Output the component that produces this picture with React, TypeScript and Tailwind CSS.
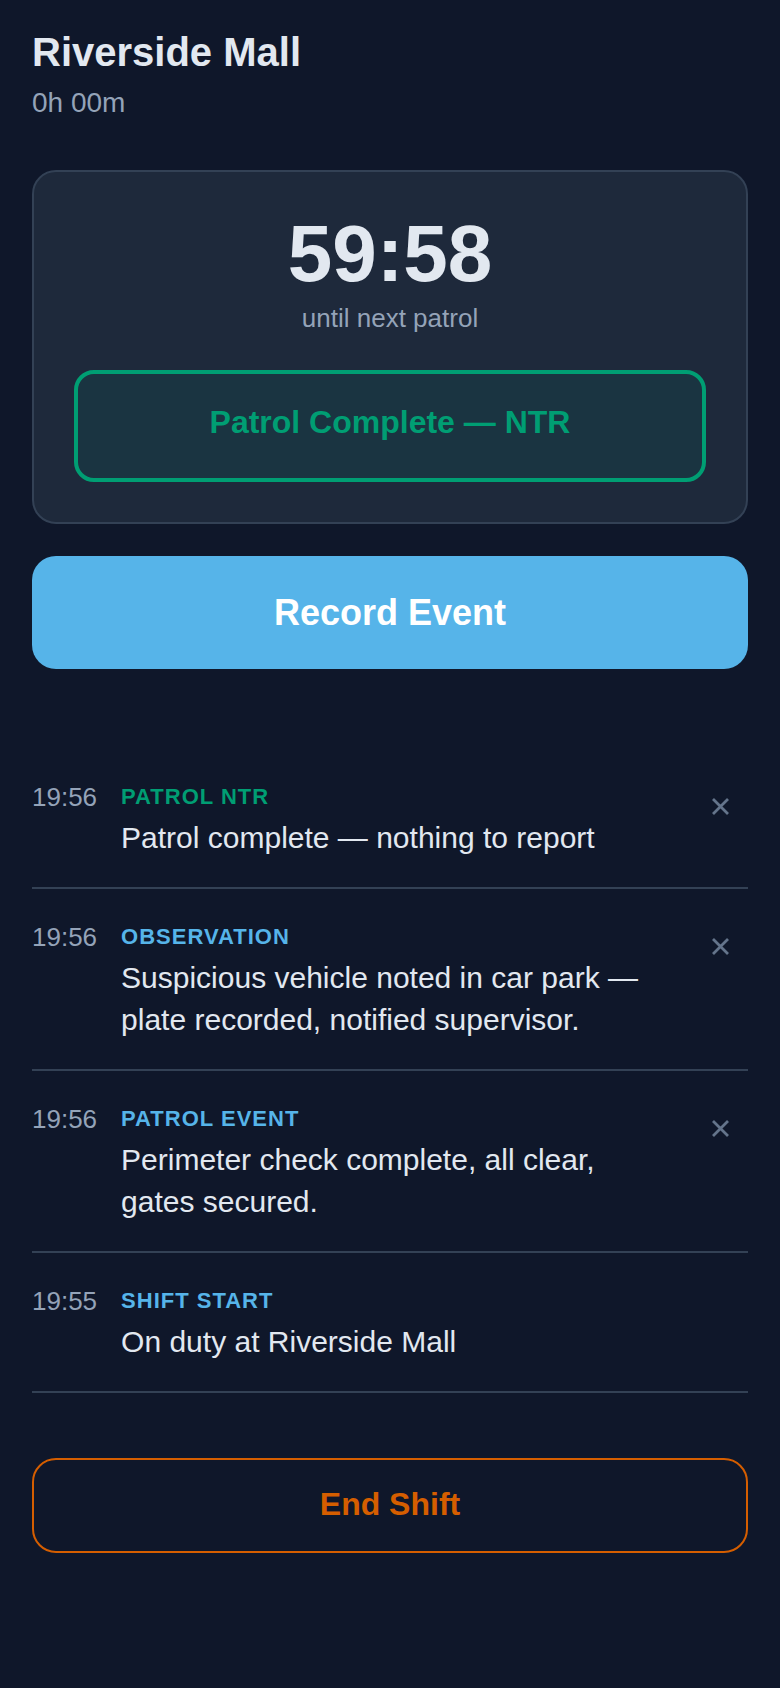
import React from 'react';

type LogEntry = {
  time: string;
  kind: string;
  tone: 'green' | 'blue';
  text: string;
  removable: boolean;
};

const entries: LogEntry[] = [
  { time: '19:56', kind: 'Patrol NTR', tone: 'green', text: 'Patrol complete — nothing to report', removable: true },
  {
    time: '19:56',
    kind: 'Observation',
    tone: 'blue',
    text: 'Suspicious vehicle noted in car park — plate recorded, notified supervisor.',
    removable: true,
  },
  {
    time: '19:56',
    kind: 'Patrol Event',
    tone: 'blue',
    text: 'Perimeter check complete, all clear, gates secured.',
    removable: true,
  },
  { time: '19:55', kind: 'Shift Start', tone: 'blue', text: 'On duty at Riverside Mall', removable: false },
];

function CloseIcon() {
  return (
    <svg width="19" height="19" viewBox="0 0 19 19" fill="none">
      <path d="M2 2L17 17M17 2L2 17" stroke="#64748b" strokeWidth="2.8" />
    </svg>
  );
}

export default function App() {
  return (
    <div className="min-h-screen bg-[#0f172a] px-[32px] pt-[26px] pb-[80px] font-['Liberation_Sans',Arial,sans-serif]">
      {/* header */}
      <h1 className="text-[40px] leading-[52px] font-bold text-[#e2e8f0]">Riverside Mall</h1>
      <p className="mt-[4px] text-[28px] leading-[42px] text-[#94a3b8]">0h 00m</p>

      {/* patrol timer */}
      <div className="mt-[46px] rounded-[24px] border-2 border-[#334155] bg-[#1e293b] p-[40px]">
        <div className="text-center text-[80px] leading-[84px] font-bold text-[#e2e8f0]">59:58</div>
        <div className="mt-[3px] text-center text-[26px] leading-[39px] text-[#94a3b8]">until next patrol</div>
        <button className="mt-[32px] flex h-[112px] w-full items-center justify-center rounded-[20px] border-4 border-[#009E73] bg-[#009E73]/10 pb-[8px] text-[32px] leading-[48px] font-bold text-[#009E73]">
          Patrol Complete — NTR
        </button>
      </div>

      <button className="mt-[32px] flex h-[113px] w-full items-center justify-center rounded-[24px] bg-[#56B4E9] text-[36px] font-bold text-white">
        Record Event
      </button>

      {/* log */}
      <ul className="mt-[80px]">
        {entries.map((e, i) => (
          <li key={i} className="flex border-b-2 border-[#334155] pt-[31px] pb-[28px]">
            <div className="flex flex-1 gap-[24px]">
              <span className="text-[26px] leading-[34px] text-[#94a3b8]">{e.time}</span>
              <div className="flex-1">
                <div
                  className={`text-[22px] leading-[33px] font-bold uppercase tracking-[1px] ${
                    e.tone === 'green' ? 'text-[#009E73]' : 'text-[#56B4E9]'
                  }`}
                >
                  {e.kind}
                </div>
                <p className="mt-[4px] text-[30px] leading-[42px] text-[#e2e8f0]">{e.text}</p>
              </div>
            </div>
            {e.removable ? (
              <button className="ml-[24px] flex h-[52px] w-[55px] items-center justify-center">
                <CloseIcon />
              </button>
            ) : (
              <div className="ml-[24px] w-[55px]" />
            )}
          </li>
        ))}
      </ul>

      <button className="mt-[65px] flex h-[95px] w-full items-center justify-center rounded-[24px] border-2 border-[#D55E00] pb-[4px] text-[32px] font-bold text-[#D55E00]">
        End Shift
      </button>
    </div>
  );
}
